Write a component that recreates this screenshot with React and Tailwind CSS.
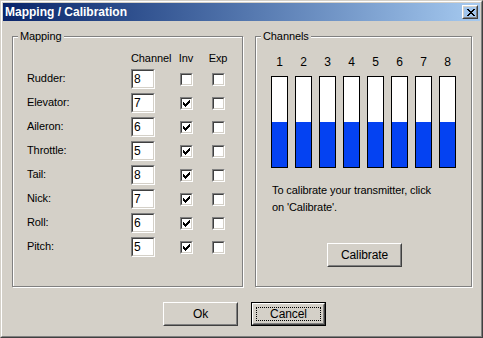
import React from "react";

const rows = [
  ["Rudder:", "8", false],
  ["Elevator:", "7", true],
  ["Aileron:", "6", true],
  ["Throttle:", "5", true],
  ["Tail:", "8", true],
  ["Nick:", "7", true],
  ["Roll:", "6", true],
  ["Pitch:", "5", true],
];

function Check() {
  const px = [
    [6, 0], [5, 1], [6, 1], [0, 2], [4, 2], [5, 2], [6, 2],
    [0, 3], [1, 3], [3, 3], [4, 3], [5, 3],
    [0, 4], [1, 4], [2, 4], [3, 4], [4, 4],
    [1, 5], [2, 5], [3, 5], [2, 6],
  ];
  return (
    <svg width="7" height="7" viewBox="0 0 7 7" shapeRendering="crispEdges" className="block">
      {px.map(([x, y], i) => (
        <rect key={i} x={x} y={y} width="1" height="1" fill="#000" />
      ))}
    </svg>
  );
}

function CloseX() {
  const px = [
    [0, 0], [1, 0], [6, 0], [7, 0],
    [1, 1], [2, 1], [5, 1], [6, 1],
    [2, 2], [3, 2], [4, 2], [5, 2],
    [3, 3], [4, 3],
    [2, 4], [3, 4], [4, 4], [5, 4],
    [1, 5], [2, 5], [5, 5], [6, 5],
    [0, 6], [1, 6], [6, 6], [7, 6],
  ];
  return (
    <svg width="8" height="7" viewBox="0 0 8 7" shapeRendering="crispEdges" className="block">
      {px.map(([x, y], i) => (
        <rect key={i} x={x} y={y} width="1" height="1" fill="#000" />
      ))}
    </svg>
  );
}

function Checkbox({ checked }) {
  return (
    <div className="w-[13px] h-[13px] border border-[#808080] border-r-white border-b-white">
      <div className="w-full h-full border border-[#404040] border-r-[#d4d0c8] border-b-[#d4d0c8] bg-white p-px">
        {checked && <Check />}
      </div>
    </div>
  );
}

function TextBox({ value }) {
  return (
    <div className="w-[24px] h-[20px] border border-[#808080] border-r-white border-b-white">
      <div className="w-full h-full border border-[#404040] border-r-[#d4d0c8] border-b-[#d4d0c8] bg-white pl-px text-[12px] leading-[16px]">
        {value}
      </div>
    </div>
  );
}

function Button({ children, isDefault }) {
  if (isDefault) {
    return (
      <div className="w-[75px] h-[24px] border border-black">
        <div className="w-full h-full border border-white border-r-[#404040] border-b-[#404040]">
          <div className="w-full h-full border border-[#d4d0c8] border-r-[#808080] border-b-[#808080] p-[2px]">
            <div className="w-full h-full border border-dotted border-black flex items-center justify-center text-[12px]">
              {children}
            </div>
          </div>
        </div>
      </div>
    );
  }
  return (
    <div className="w-[75px] h-[24px] border border-white border-r-[#404040] border-b-[#404040]">
      <div className="w-full h-full border border-[#d4d0c8] border-r-[#808080] border-b-[#808080] flex items-center justify-center text-[12px]">
        {children}
      </div>
    </div>
  );
}

function Group({ label, className, children }) {
  return (
    <div className={"relative border border-[#808080] shadow-[inset_1px_1px_0_#fff,1px_1px_0_#fff] " + className}>
      <div className="absolute left-[5px] top-[-8px] h-[14px] leading-[14px] px-[2px] bg-[#d4d0c8]">{label}</div>
      {children}
    </div>
  );
}

export default function App() {
  const levels = [45, 45, 45, 45, 45, 45, 45, 45];
  return (
    <div className="w-[483px] h-[338px] bg-[#d4d0c8] border border-[#d4d0c8] border-r-[#404040] border-b-[#404040] font-['Liberation_Sans',Arial,sans-serif] text-[11px] text-black tracking-[-0.1px]">
      <div className="h-full border border-white border-r-[#808080] border-b-[#808080] p-px flex flex-col">
        <div className="h-[18px] flex items-center justify-between bg-gradient-to-r from-[#0a246a] to-[#a6caf0] pl-[2px] pr-[2px]">
          <span className="text-white font-bold text-[12px] tracking-normal">Mapping / Calibration</span>
          <div className="w-[16px] h-[14px] border border-white border-r-[#404040] border-b-[#404040]">
            <div className="w-full h-full border border-[#d4d0c8] border-r-[#808080] border-b-[#808080] flex items-center justify-center pl-px">
              <CloseX />
            </div>
          </div>
        </div>

        <div className="flex-1 flex flex-col pt-[15px]">
          <div className="flex pl-[9px] gap-[12px]">
            <Group label="Mapping" className="w-[231px] h-[251px] pl-[14px] pt-[13px]">
              <div className="flex items-center h-[17px]">
                <div className="w-[104px]" />
                <div className="w-[24px] whitespace-nowrap">Channel</div>
                <div className="w-[15px]" />
                <div className="w-[32px] text-center">Inv</div>
                <div className="w-[32px] text-center">Exp</div>
              </div>
              {rows.map(([name, ch, inv]) => (
                <div key={name} className="flex items-center h-[24px]">
                  <div className="w-[104px] -mt-[2px]">{name}</div>
                  <TextBox value={ch} />
                  <div className="w-[15px]" />
                  <div className="w-[32px] flex justify-center">
                    <Checkbox checked={inv} />
                  </div>
                  <div className="w-[32px] flex justify-center">
                    <Checkbox checked={false} />
                  </div>
                </div>
              ))}
            </Group>

            <Group label="Channels" className="w-[217px] h-[251px] pl-[15px] pt-[18px]">
              <div className="flex gap-[7px]">
                {levels.map((_, i) => (
                  <div key={i} className="w-[17px] h-[14px] leading-[14px] text-center text-[12px]">
                    {i + 1}
                  </div>
                ))}
              </div>
              <div className="flex gap-[7px] mt-[7px]">
                {levels.map((lv, i) => (
                  <div key={i} className="w-[17px] h-[92px] border border-black bg-white flex flex-col justify-end">
                    <div className="bg-[#0442f2]" style={{ height: lv + "px" }} />
                  </div>
                ))}
              </div>
              <div className="mt-[14px] ml-px leading-[17px]">
                To calibrate your transmitter, click
                <br />
                on 'Calibrate'.
              </div>
              <div className="mt-[27px] ml-[56px]">
                <Button>Calibrate</Button>
              </div>
            </Group>
          </div>

          <div className="flex mt-[15px] pl-[160px] gap-[13px]">
            <Button>Ok</Button>
            <Button isDefault>Cancel</Button>
          </div>
        </div>
      </div>
    </div>
  );
}
